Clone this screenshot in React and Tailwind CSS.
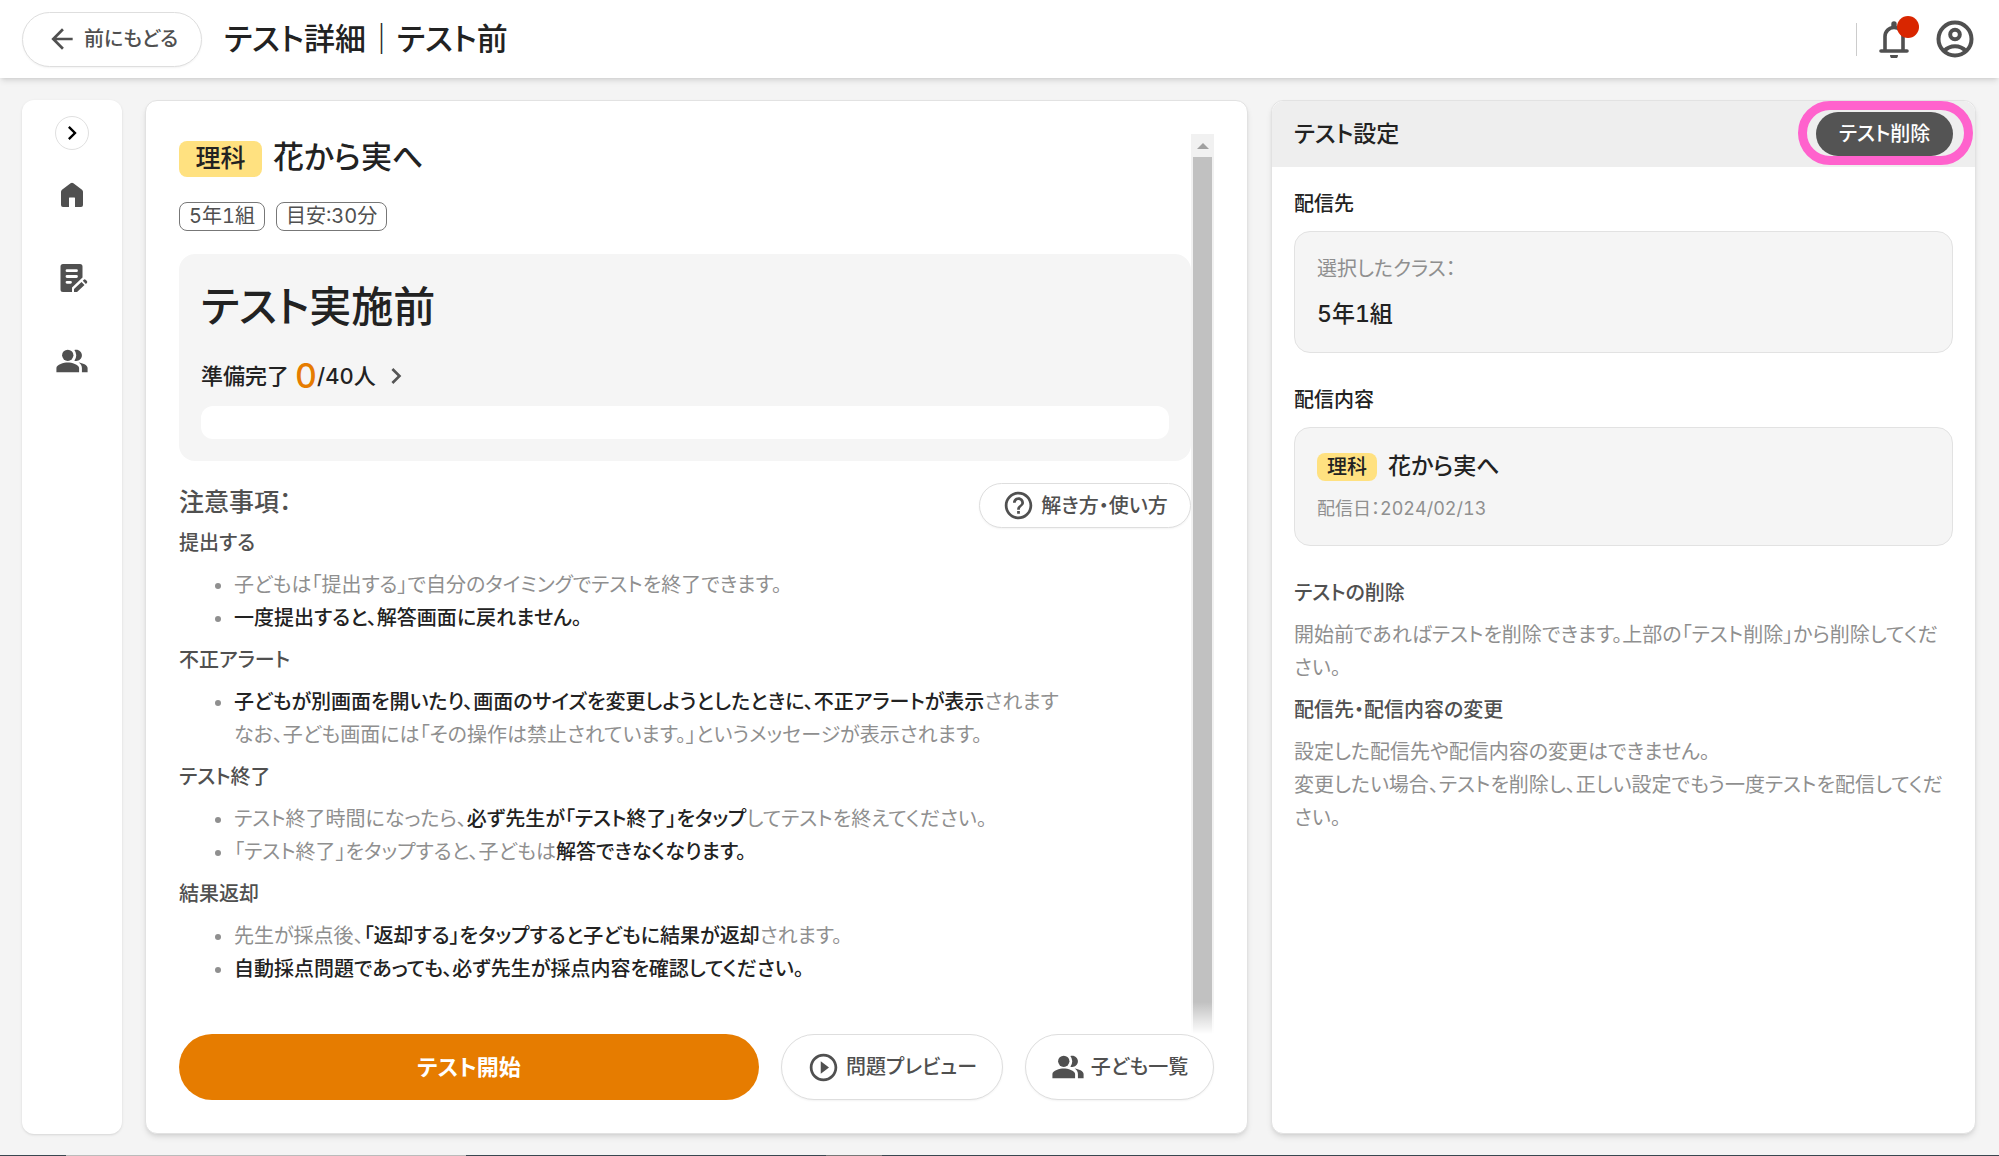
import {
  MdArrowBack,
  MdChevronRight,
  MdHelpOutline,
  MdPeopleAlt,
  MdPlayCircleOutline,
} from 'react-icons/md';

const notices = [
  {
    title: '提出する',
    items: [
      <>子どもは「提出する」で自分のタイミングでテストを終了できます。</>,
      <Strong>一度提出すると、解答画面に戻れません。</Strong>,
    ],
  },
  {
    title: '不正アラート',
    items: [
      <>
        <Strong>子どもが別画面を開いたり、画面のサイズを変更しようとしたときに、不正アラートが表示</Strong>されます
        <br />
        なお、子ども画面には「その操作は禁止されています。」というメッセージが表示されます。
      </>,
    ],
  },
  {
    title: 'テスト終了',
    items: [
      <>テスト終了時間になったら、<Strong>必ず先生が「テスト終了」をタップ</Strong>してテストを終えてください。</>,
      <>「テスト終了」をタップすると、子どもは<Strong>解答できなくなります。</Strong></>,
    ],
  },
  {
    title: '結果返却',
    items: [
      <>先生が採点後、<Strong>「返却する」をタップすると子どもに結果が返却</Strong>されます。</>,
      <Strong>自動採点問題であっても、必ず先生が採点内容を確認してください。</Strong>,
    ],
  },
];

function Strong({ children }) {
  return <strong className="font-medium text-[#222]">{children}</strong>;
}

function HomeIcon() {
  return (
    <svg viewBox="0 0 24 26" className="w-6 h-[26px]" fill="currentColor" aria-hidden="true">
      <path d="M1 23V9.700c0-.8.4-1.500 1-2L10.600 1.300a2.300 2.300 0 0 1 2.800 0L22 7.700c.6.500 1 1.200 1 2V23a2 2 0 0 1-2 2H15V16a.5.5 0 0 0-.5-.5h-5a.5.5 0 0 0-.5.5v9H3a2 2 0 0 1-2-2z" />
    </svg>
  );
}

function TestIcon() {
  return (
    <svg viewBox="0 0 28 30" className="w-7 h-[30px]" fill="currentColor" aria-hidden="true">
      <path
        fillRule="evenodd"
        d="M3 1h17a2.500 2.500 0 0 1 2.500 2.500V14.500L12 24.500V29H3a2.500 2.500 0 0 1-2.500-2.500v-23A2.500 2.500 0 0 1 3 1zm4 5.300a1.400 1.400 0 0 0 0 2.800h9.500a1.400 1.400 0 0 0 0-2.800zm0 5.800a1.400 1.400 0 0 0 0 2.800h9.500a1.400 1.400 0 0 0 0-2.800zm0 5.800a1.400 1.400 0 0 0 0 2.800h3.500a1.400 1.400 0 0 0 0-2.800z"
      />
      <path d="M14 29v-3l7.500-7 3 3L17 29zM22.800 17.800l1-1a1.300 1.300 0 0 1 1.800 0l1.300 1.300a1.300 1.300 0 0 1 0 1.800l-1 1z" />
    </svg>
  );
}

function BellIcon() {
  return (
    <svg viewBox="0 0 30 38" className="w-[30px] h-[38px]" aria-hidden="true">
      <path d="M2 31h26M6 31V16.500a9 9 0 0 1 18 0V31" fill="none" stroke="currentColor" strokeWidth="3.600" strokeLinecap="round" />
      <path d="M12.300 7V4a2.700 2.700 0 0 1 5.400 0v3z" fill="currentColor" />
      <path d="M11 35h8a4 4 0 0 1-8 0z" fill="currentColor" />
    </svg>
  );
}

function UserIcon() {
  return (
    <svg viewBox="0 0 38 38" className="w-[38px] h-[38px]" fill="none" stroke="currentColor" strokeWidth="4" aria-hidden="true">
      <circle cx="19" cy="19" r="16.500" />
      <circle cx="19" cy="14.500" r="4.800" />
      <path d="M8 31c6-6.500 16-6.500 22 0" />
    </svg>
  );
}

function PillButton({ className, children }) {
  return (
    <button
      type="button"
      className={`flex shrink-0 items-center justify-center rounded-full border border-[#dedede] bg-white text-xl font-medium whitespace-nowrap shadow-xs ${className}`}
    >
      {children}
    </button>
  );
}

function Header() {
  return (
    <header className="z-10 flex h-[78px] items-center bg-white px-[22px] shadow-md">
      <PillButton className="h-[55px] w-[180px] gap-1.5">
        <MdArrowBack className="size-8" />
        前にもどる
      </PillButton>
      <h1 className="ml-[22px] text-[31px] leading-9 font-medium text-[#222]">テスト詳細｜テスト前</h1>
      <div className="ml-auto flex items-center">
        <span className="mr-[22px] h-[33px] w-px bg-[#ccc]" />
        <button type="button" aria-label="お知らせ" className="relative mr-[27px]">
          <BellIcon />
          <span className="absolute -top-1 -right-2.5 size-[22px] rounded-full bg-[#d92600]" />
        </button>
        <button type="button" aria-label="アカウント" className="mr-[3px]">
          <UserIcon />
        </button>
      </div>
    </header>
  );
}

function Sidebar() {
  return (
    <nav className="flex flex-col items-center rounded-xl bg-white pt-4 shadow-sm">
      <button
        type="button"
        aria-label="メニューを開く"
        className="flex size-[34px] items-center justify-center rounded-full border border-[#e0e0e0] text-black"
      >
        <MdChevronRight className="size-7" />
      </button>
      <a href="#home" aria-label="ホーム" className="mt-5 flex h-[83px] items-start pt-3">
        <HomeIcon />
      </a>
      <a href="#tests" aria-label="テスト" className="flex h-[83px] items-start pt-2.5 pl-[3px]">
        <TestIcon />
      </a>
      <a href="#members" aria-label="子ども一覧" className="flex h-[83px] items-start pt-2">
        <MdPeopleAlt className="size-[34px]" />
      </a>
    </nav>
  );
}

function Scrollbar() {
  return (
    <div className="flex w-[23px] shrink-0 flex-col bg-[#f1f1f1]" aria-hidden="true">
      <div className="flex h-[23px] items-center justify-center">
        <svg viewBox="0 0 12 6" className="h-1.5 w-3">
          <path d="M0 6l6-6 6 6z" fill="#a0a0a0" />
        </svg>
      </div>
      <div className="mx-0.5 flex-1 bg-[#c1c1c1]" />
    </div>
  );
}

function StatusBox() {
  return (
    <section className="mt-[23px] rounded-2xl bg-[#f5f5f5] p-[22px]">
      <h3 className="text-[42px] leading-[62px] font-medium text-[#222]">テスト実施前</h3>
      <button type="button" className="mt-5 flex h-9 items-center text-[22px] font-medium text-[#222]">
        準備完了
        <span className="ml-1.5 text-[34px] leading-9 text-[#e67c00]">0</span>
        /40人
        <MdChevronRight className="ml-1 size-8 text-[#555]" />
      </button>
      <div role="progressbar" aria-label="準備完了" aria-valuenow={0} aria-valuemax={40} className="mt-3 h-[33px] rounded-xl bg-white" />
    </section>
  );
}

function TestDetail() {
  return (
    <main className="flex flex-col rounded-xl border border-[#e2e2e2] bg-white p-[33px] shadow-md">
      <div className="relative flex flex-1">
        <div className="min-w-0 flex-1">
          <div className="flex items-start gap-[11px] pt-[7px]">
            <span className="flex h-9 w-[83px] items-center justify-center rounded-lg bg-[#ffe180] text-[25px] font-medium text-[#222]">
              理科
            </span>
            <h2 className="text-[31px] leading-8 font-medium text-[#222]">花から実へ</h2>
          </div>
          <div className="mt-[25px] flex gap-[11px] text-xl leading-[27px]">
            <span className="rounded-lg border border-[#777] px-[9px]">5年1組</span>
            <span className="rounded-lg border border-[#777] px-[9px]">目安:30分</span>
          </div>

          <StatusBox />

          <div className="mt-[22px] flex items-start justify-between">
            <h3 className="text-[25px] leading-[38px] font-medium">注意事項：</h3>
            <PillButton className="h-[45px] w-[212px] gap-1.5">
              <MdHelpOutline className="size-[33px]" />
              解き方・使い方
            </PillButton>
          </div>
          <div className="flex flex-col gap-2.5 text-xl leading-[33px]">
            {notices.map(n => (
              <div key={n.title}>
                <h4 className="mb-2.5 leading-[31px] font-medium">{n.title}</h4>
                <ul className="list-disc pl-[55px] text-[#8f8f8f]">
                  {n.items.map((item, i) => (
                    <li key={i}>{item}</li>
                  ))}
                </ul>
              </div>
            ))}
          </div>
        </div>
        <Scrollbar />
        {/* fades the scroll area out above the buttons */}
        <div className="absolute inset-x-0 bottom-0 h-8 bg-linear-to-t from-white to-transparent" />
      </div>

      <div className="flex gap-[22px]">
        <button type="button" className="h-[66px] flex-1 rounded-full bg-[#e67c00] text-[22px] font-bold text-white">
          テスト開始
        </button>
        <PillButton className="h-[66px] w-[222px] gap-1.5">
          <MdPlayCircleOutline className="size-[33px]" />
          問題プレビュー
        </PillButton>
        <PillButton className="h-[66px] w-[189px] gap-1.5">
          <MdPeopleAlt className="size-[34px]" />
          子ども一覧
        </PillButton>
      </div>
    </main>
  );
}

function TestSettings() {
  return (
    <aside className="rounded-xl border border-[#e2e2e2] bg-white text-xl leading-[33px] shadow-md">
      <div className="flex h-[66px] items-center justify-between rounded-t-xl bg-[#eee] px-[22px]">
        <h2 className="text-[23px] font-medium text-[#222]">テスト設定</h2>
        <div className="relative">
          <button type="button" className="block h-11 w-[137px] rounded-full bg-[#545454] font-medium text-white">
            テスト削除
          </button>
          <span className="pointer-events-none absolute -top-[11px] -right-5 -bottom-[9px] -left-[18px] rounded-full border-[9px] border-[#ff62cd]" />
        </div>
      </div>

      <div className="px-[22px] pt-[21px]">
        <h3 className="font-medium text-[#222]">配信先</h3>
        <div className="mt-2.5 rounded-2xl border border-[#e2e2e2] bg-[#f5f5f5] px-[22px] py-[21px]">
          <p className="text-[#8f8f8f]">選択したクラス：</p>
          <p className="mt-3 text-[23px] font-medium text-[#222]">5年1組</p>
        </div>

        <h3 className="mt-[31px] font-medium text-[#222]">配信内容</h3>
        <div className="mt-2.5 rounded-2xl border border-[#e2e2e2] bg-[#f5f5f5] px-[22px] py-[22px]">
          <div className="flex items-center gap-[11px] text-[#222]">
            <span className="rounded-lg bg-[#ffe180] px-2.5 leading-7 font-medium">理科</span>
            <span className="text-[23px] font-medium">花から実へ</span>
          </div>
          <p className="mt-3 text-lg leading-7 text-[#8f8f8f]">配信日：2024/02/13</p>
        </div>

        <h3 className="mt-[31px] font-medium">テストの削除</h3>
        <p className="mt-[9px] text-[#8f8f8f]">
          開始前であればテストを削除できます。上部の「テスト削除」から削除してください。
        </p>
        <h3 className="mt-[9px] font-medium">配信先・配信内容の変更</h3>
        <p className="mt-[9px] text-[#8f8f8f]">
          設定した配信先や配信内容の変更はできません。
          <br />
          変更したい場合、テストを削除し、正しい設定でもう一度テストを配信してください。
        </p>
      </div>
    </aside>
  );
}

export default function App() {
  return (
    <div
      lang="ja"
      className="flex min-h-screen flex-col bg-[#f4f4f4] font-[Inter,'Noto_Sans_CJK_JP',sans-serif] text-[#505050] [font-feature-settings:'palt','tnum']"
    >
      <Header />
      <div className="grid flex-1 grid-cols-[100px_1103fr_705fr] gap-[23px] pt-[22px] pr-[23px] pb-[21px] pl-[22px]">
        <Sidebar />
        <TestDetail />
        <TestSettings />
      </div>
      <div className="flex h-px bg-[#3a4750]">
        <span className="ml-[66px] w-[400px] bg-[#bbb]" />
        <span className="ml-[360px] w-14 bg-[#777]" />
      </div>
    </div>
  );
}
